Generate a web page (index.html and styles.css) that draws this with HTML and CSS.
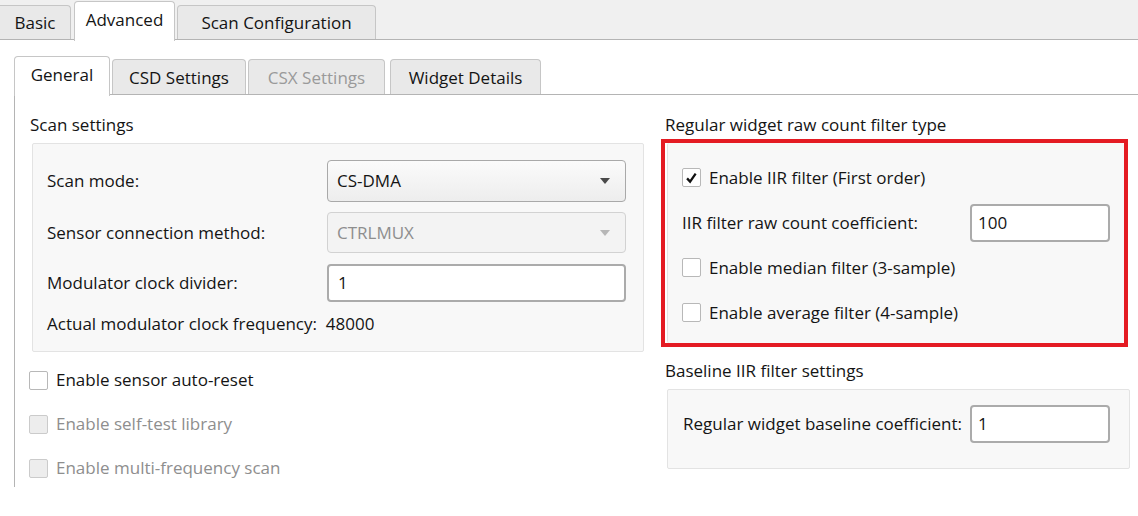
FILE: index.html
```html
<!DOCTYPE html>
<html>
<head>
<meta charset="utf-8">
<link rel="stylesheet" href="styles.css">
</head>
<body>
<div class="tabbar">
  <div class="tab tab-basic">Basic</div>
  <div class="tab tab-adv active">Advanced</div>
  <div class="tab tab-scan">Scan Configuration</div>
</div>
<div class="page">
  <div class="subtabbar">
    <div class="stab stab-gen active">General</div>
    <div class="stab stab-csd">CSD Settings</div>
    <div class="stab stab-csx disabled">CSX Settings</div>
    <div class="stab stab-wd">Widget Details</div>
  </div>
  <div class="panel">
    <div class="col-left">
      <div class="title">Scan settings</div>
      <div class="group group-scan">
        <div class="row row-c1">
          <div class="label">Scan mode:</div>
          <div class="combo"><span>CS-DMA</span><i class="arrow"></i></div>
        </div>
        <div class="row row-c2">
          <div class="label">Sensor connection method:</div>
          <div class="combo disabled"><span>CTRLMUX</span><i class="arrow"></i></div>
        </div>
        <div class="row row-in">
          <div class="label">Modulator clock divider:</div>
          <div class="input wide">1</div>
        </div>
        <div class="row row-freq">
          <div class="label">Actual modulator clock frequency:&nbsp; 48000</div>
        </div>
      </div>
      <div class="checks">
        <div class="check"><span class="box"></span><span>Enable sensor auto-reset</span></div>
        <div class="check disabled"><span class="box"></span><span>Enable self-test library</span></div>
        <div class="check disabled"><span class="box"></span><span>Enable multi-frequency scan</span></div>
      </div>
    </div>
    <div class="col-right">
      <div class="title">Regular widget raw count filter type</div>
      <div class="redbox">
        <div class="group group-filter">
          <div class="frow"><div class="check"><span class="box checked"><svg viewBox="0 0 18 18" width="18" height="18"><path d="M4.3 9.4 L7.5 12.8 L13.4 4.4" fill="none" stroke="#111" stroke-width="2.4"/></svg></span><span>Enable IIR filter (First order)</span></div></div>
          <div class="frow frow-in"><div class="label">IIR filter raw count coefficient:</div><div class="input small">100</div></div>
          <div class="frow"><div class="check"><span class="box"></span><span>Enable median filter (3-sample)</span></div></div>
          <div class="frow"><div class="check"><span class="box"></span><span>Enable average filter (4-sample)</span></div></div>
        </div>
      </div>
      <div class="title title-base">Baseline IIR filter settings</div>
      <div class="group group-base">
        <div class="brow"><div class="label">Regular widget baseline coefficient:</div><div class="input small">1</div></div>
      </div>
    </div>
  </div>
</div>
</body>
</html>
```
FILE: styles.css
```css
* { box-sizing: border-box; }
html, body { margin: 0; padding: 0; }
body {
  width: 1138px; height: 516px; overflow: hidden;
  background: #ffffff;
  font-family: "Open Sans", "Liberation Sans", sans-serif;
  font-size: 17px;
  line-height: 22px;
  color: #141414;
}
.tabbar {
  height: 40px;
  background: #f0f0f0;
  border-bottom: 1.5px solid #b4b4b4;
  display: flex;
  align-items: flex-end;
}
.tab {
  height: 34px;
  background: #e9e9e9;
  border: 1.5px solid #c6c6c6;
  border-bottom: none;
  border-radius: 4px 4px 0 0;
  display: flex; align-items: center; justify-content: center;
}
.tab-basic { width: 71px; border-left: none; border-radius: 0 4px 0 0; }
.tab-adv { width: 101px; margin-left: 3px; }
.tab-scan { width: 199px; margin-left: 2px; }
.tab.active {
  height: 40px; margin-bottom: -1.5px; background: #ffffff;
  padding-bottom: 2px;
}
.page { padding-left: 14px; padding-top: 15px; }
.subtabbar {
  height: 40px;
  display: flex; align-items: flex-end;
  border-bottom: 1.5px solid #b4b4b4;
}
.stab {
  height: 35px;
  background: #e9e9e9;
  border: 1.5px solid #c6c6c6;
  border-bottom: none;
  border-radius: 4px 4px 0 0;
  display: flex; align-items: center; justify-content: center;
  padding-top: 2px;
}
.stab.active { height: 40px; margin-bottom: -1.5px; background: #fff; padding-top: 0; padding-bottom: 2px; }
.stab-gen { width: 96px; }
.stab-csd { width: 134px; margin-left: 2px; }
.stab-csx { width: 137px; margin-left: 2px; }
.stab-wd { width: 151px; margin-left: 5px; }
.stab.disabled { color: #9a9a9a; }
.panel {
  height: 392px;
  border-left: 1.5px solid #b4b4b4;
  padding: 19px 0 0 15px;
  display: flex;
}
.col-left { width: 614px; }
.col-right { width: 469px; margin-left: 21px; }
.title { height: 22px; line-height: 22px; }
.group {
  background: #f8f8f8;
  border: 1.5px solid #e3e3e3;
  border-radius: 2px;
}
.group-scan {
  margin-top: 7px; margin-left: 2px;
  height: 209px;
  padding: 16px 17px 0 14px;
}
.row { display: flex; align-items: center; justify-content: space-between; }
.row-c1 { height: 42px; }
.row-c2 { height: 41px; margin-top: 10px; }
.row-in { height: 38px; margin-top: 11px; }
.row-freq { height: 24px; margin-top: 10px; }
.combo {
  width: 299px; height: 100%;
  border: 1.5px solid #a9a9a9; border-radius: 4px;
  background: linear-gradient(#fbfbfb, #ededed);
  display: flex; align-items: center; justify-content: space-between;
  padding: 0 15px 0 9px;
}
.combo.disabled { border-color: #d2d2d2; background: #f3f3f3; color: #8e8e8e; }
.arrow {
  width: 0; height: 0;
  border-left: 5.5px solid transparent; border-right: 5.5px solid transparent;
  border-top: 6px solid #4a4a4a;
}
.combo.disabled .arrow { border-top-color: #b6b6b6; }
.input {
  height: 100%;
  border: 2px solid #ababab; border-radius: 4px;
  background: #fff;
  display: flex; align-items: center;
  padding-left: 9px;
}
.input.wide { width: 299px; }
.input.small { width: 140px; height: 38px; padding-left: 6px; }
.checks { margin-top: 6px; margin-left: -1px; }
.checks .check { height: 44px; }
.check { display: flex; align-items: center; }
.box {
  width: 19px; height: 19px;
  border: 1.5px solid #b8b8b8; border-radius: 2px;
  background: #fff;
  margin-right: 8px;
  display: inline-flex; align-items: center; justify-content: center;
}
.box svg { display: block; }
.check.disabled { color: #8e8e8e; }
.check.disabled .box { background: #ededed; border-color: #cbcbcb; }
.redbox {
  margin-top: 3px; margin-left: -4px;
  width: 467px; height: 208px;
  border: 4px solid #e41b23;
}
.group-filter {
  height: 100%;
  margin-left: 2px;
  border-right: none; border-top: none; border-bottom: none;
  padding: 12px 14px 0 14px;
}
.frow { height: 45px; display: flex; align-items: center; justify-content: space-between; }
.title-base { margin-top: 13px; }
.group-base {
  margin-top: 7px; margin-left: 2px;
  width: 463px; height: 80px;
  padding: 15px 19px 0 15px;
}
.brow { display: flex; align-items: center; justify-content: space-between; }
```
